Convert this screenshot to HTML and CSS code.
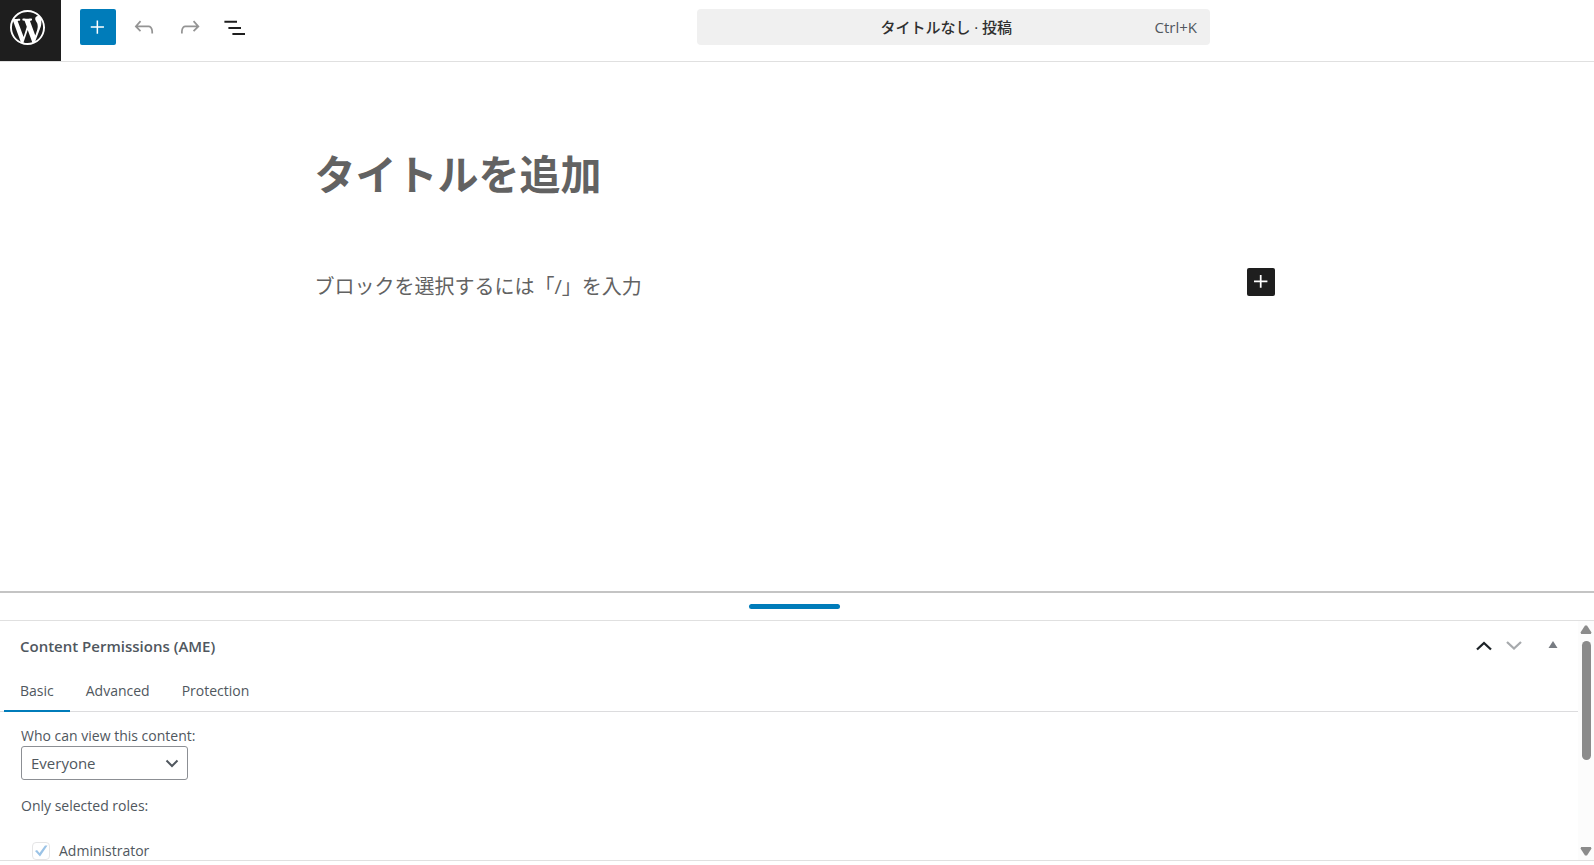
FILE: index.html
```
<!DOCTYPE html>
<html lang="ja">
<head>
    <meta charset="UTF-8">
    <title>投稿を追加</title>
    <link rel="stylesheet" href="styles.css">
</head>
<body>
    <header class="editor-header">
        <a class="site-logo" href="#" aria-label="投稿を表示">
            <svg width="35" height="35" viewBox="0 0 20 20"><path fill="#fff" d="M20 10c0-5.51-4.49-10-10-10C4.48 0 0 4.49 0 10c0 5.52 4.48 10 10 10 5.51 0 10-4.48 10-10zM7.78 15.37L4.37 6.22c.55-.02 1.17-.08 1.17-.08.5-.06.44-1.13-.06-1.11 0 0-1.45.11-2.37.11-.18 0-.37 0-.58-.01C4.12 2.69 6.87 1.11 10 1.11c2.33 0 4.45.87 6.05 2.34-.68-.11-1.65.39-1.65 1.58 0 .74.45 1.36.9 2.1.35.61.55 1.36.55 2.46 0 1.49-1.4 5-1.4 5l-3.03-8.37c.54-.02.82-.17.82-.17.5-.05.44-1.25-.06-1.22 0 0-1.44.12-2.38.12-.87 0-2.33-.12-2.33-.12-.5-.03-.56 1.2-.06 1.22l.92.08 1.26 3.41zM17.41 10c.24-.64.74-1.87.43-4.25.7 1.29 1.05 2.71 1.05 4.25 0 3.29-1.73 6.24-4.4 7.78.97-2.59 1.94-5.2 2.92-7.78zM6.1 18.09C3.12 16.65 1.11 13.53 1.11 10c0-1.3.23-2.48.72-3.59C3.25 10.3 4.67 14.2 6.1 18.09zm4.03-6.63l2.58 6.98c-.86.29-1.76.45-2.71.45-.79 0-1.57-.11-2.29-.33.81-2.38 1.62-4.74 2.42-7.1z"/></svg>
        </a>
        <div class="toolbar">
            <button class="tool tool-primary" aria-label="ブロック挿入ツール">
                <svg width="28" height="28" viewBox="0 0 24 24"><path d="M10.800 12.700v5h1.300v-5h5v-1.300h-5v-5h-1.300v5h-5v1.300z"/></svg>
            </button>
            <button class="tool" disabled aria-label="元に戻す">
                <svg width="28" height="28" viewBox="0 0 24 24"><path d="M18.300 11.700c-.6-.6-1.400-.9-2.300-.9H6.700l2.900-3.300-1.100-1-4.500 5L8.500 16l1-1-2.700-2.700H16c.5 0 .9.200 1.300.5 1 1 1 3.400 1 4.500v.300h1.500v-.2c0-1.500 0-4.300-1.500-5.700z"/></svg>
            </button>
            <button class="tool" disabled aria-label="やり直し">
                <svg width="28" height="28" viewBox="0 0 24 24"><path d="M15.600 6.500l-1.100 1 2.900 3.300H8c-.9 0-1.700.3-2.300.9-1.400 1.500-1.400 4.200-1.400 5.600v.2h1.500v-.3c0-1.100 0-3.500 1-4.500.3-.3.7-.5 1.300-.5h9.200L14.500 15l1.100 1.100 4.600-4.600-4.600-5z"/></svg>
            </button>
            <button class="tool" aria-label="ドキュメント概観">
                <svg width="24" height="24" viewBox="0 0 24 24"><path d="M.4 5.800H13v1.900H.4zM4.400 12H17v1.900H4.400zM8.400 18.100H21V20H8.400z"/></svg>
            </button>
        </div>
        <button class="command-bar">
            <span class="command-title">タイトルなし · 投稿</span>
            <span class="command-key">Ctrl+K</span>
        </button>
    </header>

    <main class="canvas">
        <div class="post">
            <h1 class="post-title">タイトルを追加</h1>
            <div class="block-row">
                <p class="placeholder">ブロックを選択するには「/」を入力</p>
                <button class="inserter" aria-label="ブロックを追加">
                    <svg width="28" height="28" viewBox="0 0 24 24"><path d="M11 12.300V17h1.500v-4.700h5v-1.500h-5V6H11v4.800H6v1.500z"/></svg>
                </button>
            </div>
        </div>
    </main>

    <section class="meta-area">
        <div class="resize-bar"><span class="resize-handle"></span></div>
        <div class="meta-scroll">
            <div class="meta-box">
                <div class="meta-header">
                    <h2>Content Permissions (AME)</h2>
                    <div class="meta-actions">
                        <button class="order" aria-label="上に移動">
                            <svg width="16" height="10" viewBox="0 0 16 10"><path d="M1 8.500L8 2l7 6.500" fill="none" stroke="#1d2327" stroke-width="2.300"/></svg>
                        </button>
                        <button class="order" disabled aria-label="下に移動">
                            <svg width="16" height="10" viewBox="0 0 16 10"><path d="M1 1L8 7.500l7-6.500" fill="none" stroke="#a7aaad" stroke-width="2.300"/></svg>
                        </button>
                        <button class="order toggle" aria-label="パネルを切り替え">
                            <svg width="10" height="10" viewBox="0 0 10 10"><path d="M5 0l4.500 7h-9z" fill="#787c82"/></svg>
                        </button>
                    </div>
                </div>
                <nav class="tabs">
                    <a class="tab active" href="#basic">Basic</a>
                    <a class="tab" href="#advanced">Advanced</a>
                    <a class="tab" href="#protection">Protection</a>
                </nav>
                <div class="tab-panel" id="basic">
                    <label class="field-label" for="viewer">Who can view this content:</label>
                    <div class="select-wrap">
                        <select id="viewer">
                            <option>Everyone</option>
                            <option>Logged-in users</option>
                        </select>
                        <svg class="select-arrow" width="14" height="10" viewBox="0 0 14 10"><path d="M1.500 2.500L7 8l5.500-5.500" fill="none" stroke="#50575e" stroke-width="2"/></svg>
                    </div>
                    <p class="field-label">Only selected roles:</p>
                    <div class="role">
                        <span class="check-wrap">
                            <input type="checkbox" id="role-admin" checked disabled>
                            <svg class="check" width="14" height="14" viewBox="0 0 14 14"><path d="M1 7l2-1 2.500 3L11 1.500h2.500L6 12.500z" fill="#9bc3e6"/></svg>
                        </span>
                        <label for="role-admin">Administrator</label>
                    </div>
                </div>
            </div>
            <div class="scrollbar">
                <svg width="12" height="10" viewBox="0 0 12 10"><path d="M5 .5h2L11.500 7.500 10.800 9H1.200L.5 7.500z" fill="#8b8b8b"/></svg>
                <span class="thumb"></span>
                <svg class="arrow-down" width="12" height="10" viewBox="0 0 12 10"><path d="M5 9.500h2L11.500 2.500 10.800 1H1.200L.5 2.500z" fill="#8b8b8b"/></svg>
            </div>
        </div>
    </section>
</body>
</html>
```
FILE: styles.css
```
* { box-sizing: border-box; }

body {
    margin: 0;
    min-height: 100vh;
    display: flex;
    flex-direction: column;
    background: #fff;
    color: #50575e;
    font-family: "Open Sans", "Noto Sans CJK JP", sans-serif;
    font-size: 14px;
    line-height: 20px;
}

button { border: 0; padding: 0; background: none; font: inherit; color: inherit; }
h1, h2, p { margin: 0; }
svg { display: block; }

/* header */
.editor-header {
    display: grid;
    grid-template-columns: 61px 252px 1fr 513px 1fr;
    height: 62px;
    border-bottom: 1px solid #e0e0e0;
}
.site-logo {
    height: 61px;
    padding: 10px;
    background: #1e1e1e;
}
.toolbar { display: flex; gap: 10px; padding: 9px 19px; }
.tool {
    display: flex;
    align-items: center;
    justify-content: center;
    width: 36px;
    height: 36px;
    border-radius: 2px;
    fill: #1e1e1e;
}
.tool:disabled { fill: #949494; }
.tool-primary { background: #007cba; fill: #fff; }
.command-bar {
    grid-column: 4;
    display: flex;
    align-items: center;
    height: 36px;
    margin-top: 9px;
    padding: 0 13px;
    border-radius: 4px;
    background: #f0f0f0;
    color: #2f2f2f;
    font-size: 15px;
}
.command-title { flex: 1; padding-left: 28px; font-weight: 500; }
.command-key { color: #50575e; }

/* canvas */
.canvas { flex: 1; padding-right: 5px; }
.post { max-width: 960px; margin: 0 auto; padding-top: 82px; }
.post-title { color: #626262; font-size: 41px; line-height: 60px; font-weight: 700; }
.block-row {
    display: flex;
    align-items: flex-start;
    justify-content: space-between;
    padding-top: 64px;
}
.placeholder { padding-top: 4px; color: #626262; font-size: 20px; line-height: 30px; }
.inserter {
    display: flex;
    align-items: center;
    justify-content: center;
    width: 28px;
    height: 28px;
    border-radius: 2px;
    background: #1e1e1e;
    fill: #fff;
}

/* meta boxes */
.meta-area { margin-bottom: 4px; border-top: 2px solid #c4c4c4; border-bottom: 1px solid #e0e0e0; }
.resize-bar {
    display: flex;
    align-items: center;
    justify-content: center;
    height: 27px;
    padding-right: 6px;
}
.resize-handle { width: 91px; height: 5px; border-radius: 3px; background: #007cba; }
.meta-scroll {
    display: flex;
    height: 240px;
    border-top: 1px solid #e0e0e0;
    overflow: hidden;
}
.meta-box { flex: 1; }
.meta-header {
    display: flex;
    align-items: center;
    justify-content: space-between;
    height: 50px;
    padding: 0 20px;
}
.meta-header h2 { font-size: 15px; line-height: 20px; font-weight: 600; }
.meta-actions { display: flex; align-items: center; gap: 14px; }
.toggle { margin-left: 12px; }

.tabs { display: flex; border-bottom: 1px solid #dcdcde; padding-left: 4px; }
.tab {
    height: 40px;
    padding: 10px 16px;
    color: #50575e;
    text-decoration: none;
}
.tab.active { margin-bottom: -1px; height: 41px; border-bottom: 2px solid #007cba; }

.tab-panel { padding: 14px 21px; }
.field-label { display: block; line-height: 20px; }
.select-wrap { position: relative; width: 167px; margin: 0 0 16px; }
select {
    display: block;
    appearance: none;
    width: 100%;
    height: 34px;
    padding: 0 9px;
    border: 1px solid #8c8f94;
    border-radius: 3px;
    background: #fff;
    color: #50575e;
    font: inherit;
    font-size: 15px;
}
.select-arrow { position: absolute; top: 12px; right: 9px; }
.role { display: flex; align-items: center; gap: 9px; padding: 25px 0 0 11px; }
.check-wrap { position: relative; width: 18px; height: 18px; }
.check-wrap input {
    appearance: none;
    display: block;
    width: 18px;
    height: 18px;
    margin: 0;
    border: 1px solid #e5e5e6;
    border-radius: 4px;
}
.check { position: absolute; top: 2px; left: 2px; }

.scrollbar {
    display: flex;
    flex-direction: column;
    align-items: center;
    width: 16px;
    padding: 4px 0;
    background: #fcfcfc;
}
.thumb { width: 9px; height: 119px; margin-top: 6px; border-radius: 5px; background: #8b8b8b; }
.arrow-down { margin-top: auto; }
```
